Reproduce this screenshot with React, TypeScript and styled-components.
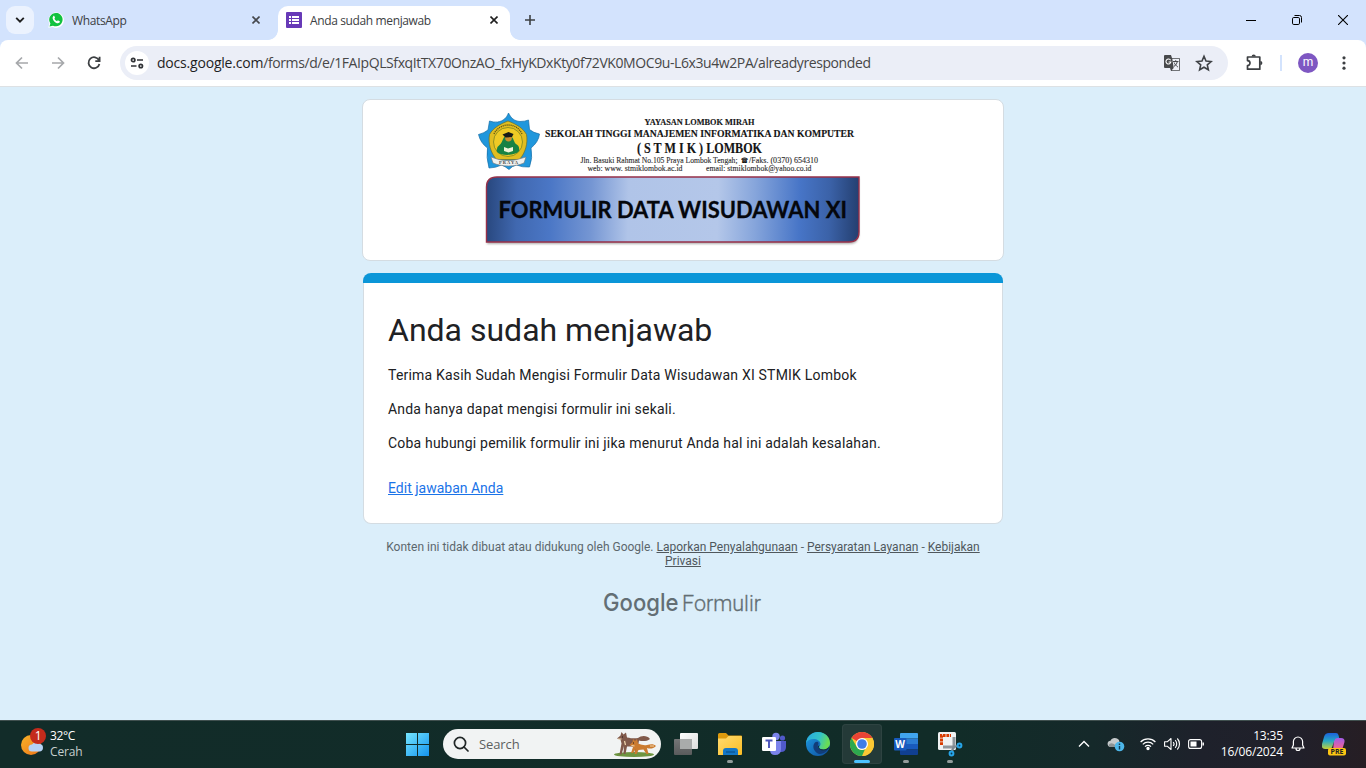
import React from "react";
import styled, { createGlobalStyle } from "styled-components";

const Global = createGlobalStyle`
  * { box-sizing: border-box; }
  body { margin: 0; background: #dbeefa; overflow: hidden; }
  svg { display: block; flex: none; }
`;

const ui = `"Open Sans", "Noto Sans", sans-serif`;

const Screen = styled.div`
  width: 1366px;
  height: 768px;
  display: flex;
  flex-direction: column;
  background: #dbeefa;
  font-family: ${ui};
`;

/* ---------- browser window ---------- */

const TabStrip = styled.div`
  height: 40px;
  flex: none;
  display: flex;
  align-items: flex-end;
  background: #d3e3fd;
  padding-left: 6px;
`;

const TabSearch = styled.div`
  width: 28px;
  height: 28px;
  margin-bottom: 6px;
  border-radius: 9px;
  background: #ebf2fe;
  display: flex;
  align-items: center;
  justify-content: center;
`;

const Tab = styled.div<{ $active?: boolean }>`
  position: relative;
  width: 232px;
  height: 34px;
  margin-left: 6px;
  padding: 0 11px 6px 8px;
  display: flex;
  align-items: center;
  border-radius: 10px 10px 0 0;
  background: ${(p) => (p.$active ? "#fff" : "transparent")};
  ${(p) =>
    p.$active &&
    `&::before, &::after {
      content: "";
      position: absolute;
      bottom: 0;
      width: 10px;
      height: 10px;
    }
    &::before { left: -10px; background: radial-gradient(circle at 0 0, transparent 9.5px, #fff 10.2px); }
    &::after { right: -10px; background: radial-gradient(circle at 100% 0, transparent 9.5px, #fff 10.2px); }`}
`;

const TabTitle = styled.span<{ $spacing: number }>`
  flex: 1;
  margin-left: 8px;
  padding-top: 1px;
  font-size: 12px;
  line-height: 16px;
  letter-spacing: ${(p) => p.$spacing}px;
  color: #3c4043;
  white-space: nowrap;
`;

const TabClose = styled.div<{ $inset: number }>`
  margin-right: ${(p) => p.$inset}px;
`;

const NewTab = styled.div`
  margin: 0 0 14px 14px;
`;

const WindowControls = styled.div`
  margin-left: auto;
  height: 40px;
  display: flex;
`;

const WindowButton = styled.div`
  width: 46px;
  display: flex;
  align-items: center;
  justify-content: center;
`;

const ToolbarWrap = styled.div`
  background: #d3e3fd;
  flex: none;
`;

const Toolbar = styled.div`
  height: 47px;
  border-radius: 8px 8px 0 0;
  border-bottom: 1px solid #dde1e4;
  background: #fff;
  display: flex;
  align-items: center;
  padding: 0 12px;
`;

const NavButtons = styled.div`
  display: flex;
  gap: 16px;
  width: 108px;
`;

const Omnibox = styled.div`
  width: 1108px;
  height: 34px;
  border-radius: 17px;
  background: #ebeef7;
  display: flex;
  align-items: center;
  padding: 0 15px 0 5px;
`;

const SiteInfo = styled.div`
  width: 24px;
  height: 24px;
  border-radius: 50%;
  background: #fff;
  display: flex;
  align-items: center;
  justify-content: center;
`;

const Url = styled.div`
  flex: 1;
  margin-left: 8px;
  padding-bottom: 0;
  font-size: 14px;
  line-height: 20px;
  letter-spacing: -0.41px;
  white-space: nowrap;
  color: #474747;
  b { font-weight: 400; color: #1f1f1f; letter-spacing: -0.2px; }
`;

const OmniIcons = styled.div`
  display: flex;
  gap: 14px;
  align-items: center;
`;

const ToolbarActions = styled.div`
  margin-left: 16px;
  display: flex;
  align-items: center;
`;

const Divider = styled.div`
  width: 2px;
  height: 16px;
  margin: 0 16px 0 16px;
  background: #d3e3fd;
`;

const Avatar = styled.div`
  width: 20px;
  height: 20px;
  margin-right: 24px;
  border-radius: 50%;
  background: #7e57c2;
  color: #fff;
  font-family: Roboto, sans-serif;
  font-size: 12px;
  line-height: 19px;
  text-align: center;
`;

/* ---------- form page ---------- */

const Page = styled.main`
  flex: 1;
  display: flex;
  flex-direction: column;
  align-items: center;
  padding-top: 12px;
  font-family: Roboto, sans-serif;
`;

const BannerCard = styled.div`
  width: 642px;
  height: 162px;
  border: 1px solid #d4dce2;
  border-radius: 8px;
  background: #fff;
  overflow: hidden;
`;

const FormCard = styled.section`
  width: 640px;
  height: 251px;
  margin-top: 12px;
  border: 1px solid #d4dce2;
  border-top: 0;
  border-radius: 8px;
  background: #fff;
`;

const Accent = styled.div`
  height: 10px;
  margin: 0 -1px;
  border-radius: 8px 8px 0 0;
  background: #0b96d8;
`;

const FormBody = styled.div`
  padding: 27px 24px 0;
  color: #202124;
`;

const Title = styled.h1`
  margin: 0 0 15px;
  font-size: 32px;
  line-height: 40px;
  font-weight: 400;
`;

const Paragraph = styled.p`
  margin: 0 0 14px;
  font-size: 14px;
  line-height: 20px;
  letter-spacing: 0.2px;
`;

const EditLink = styled.a`
  display: block;
  margin-top: 25px;
  font-size: 14px;
  line-height: 20px;
  color: #1a73e8;
  text-decoration: underline;
`;

const Footnote = styled.div`
  width: 600px;
  margin-top: 16px;
  text-align: center;
  font-size: 12px;
  line-height: 14px;
  color: #5c676d;
  u { color: #50585d; }
`;

const Brand = styled.div`
  margin-top: 12px;
`;

/* ---------- taskbar ---------- */

const Taskbar = styled.footer`
  height: 48px;
  flex: none;
  display: flex;
  align-items: center;
  padding-bottom: 1px;
  border-top: 1px solid #40504f;
  background: linear-gradient(90deg, #122c29 0%, #112c28 70%, #15292a 80%, #1e212b 88%, #21202a 95%, #261e24 100%);
  color: #fff;
  font-size: 12px;
`;

const Weather = styled.div`
  width: 405px;
  padding: 0 0 0 20px;
  display: flex;
  gap: 3px;
  line-height: 16px;
  letter-spacing: -0.4px;
  span { color: #c6cfce; letter-spacing: -0.15px; }
`;

const SearchBox = styled.div`
  width: 218px;
  height: 30px;
  margin: 0 5px 0 14px;
  border-radius: 15px;
  background: #f1f3f3;
  display: flex;
  align-items: center;
  padding: 0 5px 0 10px;
  color: #5c5f5f;
  font-size: 13px;
  letter-spacing: -0.1px;
  span { flex: 1; margin-left: 10px; }
`;

const AppSlot = styled.div<{ $active?: boolean; $running?: boolean }>`
  position: relative;
  width: 40px;
  height: 40px;
  margin-right: 4px;
  border-radius: 4px;
  display: flex;
  align-items: center;
  justify-content: center;
  ${(p) => p.$active && `background: #243a38; box-shadow: inset 0 0 0 1px #2e4341;`}
  ${(p) =>
    (p.$active || p.$running) &&
    `&::after {
      content: "";
      position: absolute;
      bottom: 1px;
      width: ${p.$active ? 16 : 6}px;
      height: 3px;
      border-radius: 2px;
      background: ${p.$active ? "#4cc2ff" : "#929c9b"};
    }`}
`;

const Tray = styled.div`
  margin-left: auto;
  display: flex;
  align-items: center;
  padding-right: 19px;
`;

const TrayItem = styled.div<{ $gap: number }>`
  margin-left: ${(p) => p.$gap}px;
`;

const Clock = styled.div`
  width: 69px;
  margin: 0 8px 0 10px;
  text-align: right;
  line-height: 16px;
  letter-spacing: -0.15px;
  white-space: nowrap;
`;

const Cross = ({ color }: { color: string }) => (
  <svg width="8" height="8" viewBox="0 0 8 8" stroke={color} strokeWidth="1.6">
    <path d="M.5 .5l7 7M7.500 .5l-7 7" />
  </svg>
);

const WhatsAppIcon = () => (
  <svg width="16" height="16" viewBox="0 0 16 16">
    <path d="M.3 15.800l1.100-4A7.700 7.700 0 1 1 4.600 15z" fill="#fff" />
    <path d="M1.500 14.600l.9-3.100A6.700 6.700 0 1 1 5 13.700z" fill="#12c23f" />
    <path d="M5.200 4.200c.4-.5 1-.5 1.200 0l.6 1.400c.1.3-.2.6-.6 1.100.6 1.200 1.400 1.900 2.700 2.500.5-.7.7-1 1.100-.8l1.500.8c.4.3 0 1.300-.5 1.600-1.500 1-3.600-.1-4.900-1.400C4.900 7.900 3.900 5.700 5.200 4.200z" fill="#fff" />
  </svg>
);

const FormsIcon = () => (
  <svg width="16" height="16" viewBox="0 0 16 16">
    <rect width="16" height="16" rx="1" fill="#673ab7" />
    <path d="M3 4h2v2H3zM6 4h7v2H6zM3 7h2v2H3zM6 7h7v2H6zM3 10h2v2H3zM6 10h7v2H6z" fill="#fff" />
  </svg>
);

const Banner = () => (
  <svg width="640" height="160" viewBox="363 100 640 160">
    <defs>
      <linearGradient id="plate" gradientUnits="userSpaceOnUse" x1="487" y1="205" x2="859" y2="213">
        <stop offset="0" stopColor="#29487f" />
        <stop offset="0.08" stopColor="#4068b0" />
        <stop offset="0.17" stopColor="#4b77c6" />
        <stop offset="0.28" stopColor="#7596d3" />
        <stop offset="0.38" stopColor="#b0c4e8" />
        <stop offset="0.62" stopColor="#b4c7e9" />
        <stop offset="0.72" stopColor="#86a5db" />
        <stop offset="0.84" stopColor="#4775c7" />
        <stop offset="0.92" stopColor="#3b62a8" />
        <stop offset="1" stopColor="#243f70" />
      </linearGradient>
      <filter id="soft" x="-5%" y="-5%" width="110%" height="120%">
        <feGaussianBlur stdDeviation="0.9" />
      </filter>
    </defs>

    <path d="M508.500 113C511 118 514 121 520 121.500q5 0 8.500-1.500l1 9.500q4 3.500 10 4.500-1 8-8.500 14 2 10-1.500 19-7 .5-13-2-4.500 1-7.500 4.500-3.500-3-7.500-4.500-6 3-12.500 3-3-11-1.500-20-7-5-9-13.500 6-1.500 9.500-4.500l1.500-9q4 1.500 8 1C503.500 121 506.500 118 508.500 113z" fill="#2097dc" stroke="#176fa8" strokeWidth=".7" strokeLinejoin="round" />
    <path d="M508 121c8 3 15 7 18.500 13.500 1.500 9-1 18-7 25h-23c-6-7-8.500-16-7-25C493 128 500 124 508 121z" fill="#e1bd20" stroke="#6e7126" strokeWidth=".7" />
    <circle cx="508" cy="142" r="14.500" fill="#efca25" stroke="#6d7d21" strokeWidth=".7" />
    <path d="M494 134c5-11 22-13 28 0" fill="none" stroke="#5f5517" strokeWidth="1.300" strokeDasharray="1.200 .8" />
    <path d="M508 135.500c6 0 5 6 8 8.500q4 2 3 7c-4 5-18 5-22 1q-1-5 2.500-7c4-3 2.500-9.500 8.500-9.500z" fill="#178243" />
    <circle cx="508.500" cy="138" r="3.400" fill="#cc8f2e" />
    <path d="M502.500 134.500l6-2.500 5 2-1.500 3-6.500 .5z" fill="#171b18" />
    <path d="M504 147l4 1.500 5-1.500v4l-4.500 1.500-4.500-1.500z" fill="#edf4d8" />
    <path d="M491 157l6 2c7 2 15 2 22 0l7-2-2 6c-9 4-22 4-31 0z" fill="#eef0ee" stroke="#777" strokeWidth=".6" />
    <text x="508.500" y="163.500" textAnchor="middle" fontSize="4.500" fontFamily="Liberation Serif, serif" fontWeight="700" fill="#444" textLength="19">PRAYA</text>

    <g fontFamily='"Liberation Serif", serif' fill="#151515" stroke="#151515" strokeWidth=".15" fontWeight="700">
      <text x="644.500" y="125" fontSize="9.200" textLength="110" lengthAdjust="spacingAndGlyphs">YAYASAN LOMBOK MIRAH</text>
      <text x="545" y="137" fontSize="11.200" textLength="309" lengthAdjust="spacingAndGlyphs">SEKOLAH TINGGI MANAJEMEN INFORMATIKA DAN KOMPUTER</text>
      <text x="637" y="152.500" fontSize="13.800" textLength="125" lengthAdjust="spacingAndGlyphs">( S T M I K ) LOMBOK</text>
    </g>
    <g fontFamily='"Liberation Serif", serif' fill="#2c2c2c" stroke="#2c2c2c" strokeWidth=".12">
      <text x="580.500" y="162.700" fontSize="8.200" textLength="157" lengthAdjust="spacingAndGlyphs">Jln. Basuki Rahmat No.105 Praya Lombok Tengah;</text>
      <text x="741" y="162.500" fontSize="7.500" fontFamily="DejaVu Sans, sans-serif" fill="#111" textLength="7" lengthAdjust="spacingAndGlyphs">☎</text>
      <text x="749" y="162.700" fontSize="8.200" textLength="69" lengthAdjust="spacingAndGlyphs">/Faks. (0370) 654310</text>
      <text x="587.500" y="171.300" fontSize="8.200" textLength="95" lengthAdjust="spacingAndGlyphs">web: www. stmiklombok.ac.id</text>
      <text x="706" y="171.300" fontSize="8.200" textLength="105.500" lengthAdjust="spacingAndGlyphs">email: stmiklombok@yahoo.co.id</text>
    </g>

    <path d="M497 178h362v56q0 10-10 10H487v-56q0-10 10-10z" fill="#777" opacity=".6" filter="url(#soft)" />
    <path d="M497 177h362v55q0 10-10 10H486.500v-55q0-10 10.500-10z" fill="url(#plate)" stroke="#973049" strokeWidth="1.400" />
    <text x="498.500" y="218.300" fontSize="22.500" fontFamily="Lato, sans-serif" fontWeight="700" fill="#05070c" stroke="#05070c" strokeWidth=".3" textLength="348.500" lengthAdjust="spacingAndGlyphs">FORMULIR DATA WISUDAWAN XI</text>
  </svg>
);

const FoxIcon = () => (
  <svg width="44" height="28" viewBox="0 0 44 28">
    <ellipse cx="22" cy="24.500" rx="20" ry="2.500" fill="#6d9440" />
    <path d="M5 8.500l3.500-3L9.500 2l2 2.500L14 2.500l1 5c5 1 8 1 11 .5 3-2.500 9-3 12 1-3 2.500-8 2.500-11 1.500l-1 6-1 7h-2l-1-7-7 0-1.500 7.500h-2l.5-8-2.500 8.500H7.500l2-11-1-4z" fill="#80594a" />
    <path d="M17.500 15l3-3 .5-3 2 2 2-2 1 4.500c4 1.500 6 2 9 1.500 4-1 7-1 9 1-3 3-6 3-9 2l1.500 6h-2l-3-4.500-5 .5-2 4h-2l1-5-2.500 4h-2l2-6z" fill="#cb7b2f" />
    <path d="M6 9l3.500 0M12.500 11l1 4M19.500 15.500l3 .5M38 16l4 0" stroke="#f0d6ae" strokeWidth="1.200" />
    <path d="M10 7h1M21 13h1" stroke="#231b18" strokeWidth="1" />
  </svg>
);

export default function App() {
  return (
    <Screen>
      <Global />
      <TabStrip>
        <TabSearch>
          <svg width="10" height="6" viewBox="0 0 10 6" fill="none" stroke="#1f1f1f" strokeWidth="1.900">
            <path d="M1.200 .9L5 4.600 8.800 .9" />
          </svg>
        </TabSearch>
        <Tab>
          <WhatsAppIcon />
          <TabTitle $spacing={-0.35}>WhatsApp</TabTitle>
          <TabClose $inset={1}><Cross color="#45484d" /></TabClose>
        </Tab>
        <Tab $active>
          <FormsIcon />
          <TabTitle $spacing={-0.37}>Anda sudah menjawab</TabTitle>
          <TabClose $inset={1}><Cross color="#1f1f1f" /></TabClose>
        </Tab>
        <NewTab>
          <svg width="12" height="12" viewBox="0 0 12 12" stroke="#3c4043" strokeWidth="1.600">
            <path d="M6 1v10M1 6h10" />
          </svg>
        </NewTab>
        <WindowControls>
          <WindowButton>
            <svg width="10" height="10" viewBox="0 0 10 10"><path d="M0 5.500h10" stroke="#000" /></svg>
          </WindowButton>
          <WindowButton>
            <svg width="10" height="10" viewBox="0 0 10 10" fill="none" stroke="#000">
              <rect x=".5" y="2.500" width="7" height="7" rx="1.300" />
              <path d="M2.500 .5h5a2 2 0 0 1 2 2v5" />
            </svg>
          </WindowButton>
          <WindowButton>
            <svg width="10" height="10" viewBox="0 0 10 10" stroke="#000" strokeWidth="1.100"><path d="M0 0l10 10M10 0L0 10" /></svg>
          </WindowButton>
        </WindowControls>
      </TabStrip>

      <ToolbarWrap>
        <Toolbar>
          <NavButtons>
            <svg width="20" height="20" viewBox="0 0 20 20" fill="none" stroke="#a6a8ab" strokeWidth="1.700"><path d="M16 10H5M10 4.500L4.500 10l5.500 5.500" /></svg>
            <svg width="20" height="20" viewBox="0 0 20 20" fill="none" stroke="#a6a8ab" strokeWidth="1.700"><path d="M4 10h11M10 4.500l5.500 5.500-5.500 5.500" /></svg>
            <svg width="20" height="20" viewBox="0 0 20 20" fill="none" stroke="#3c3f42" strokeWidth="1.800"><path d="M15 7.300A5.500 5.500 0 1 0 15.400 11M15.600 3.800v4.300h-4.300" /></svg>
          </NavButtons>
          <Omnibox>
            <SiteInfo>
              <svg width="14" height="12" viewBox="0 0 14 12" fill="none" stroke="#303236" strokeWidth="1.700">
                <circle cx="3.200" cy="3" r="1.700" /><path d="M7 3h6M1 9h5.500" /><circle cx="10.800" cy="9" r="1.700" />
              </svg>
            </SiteInfo>
            <Url><b>docs.google.com</b>/forms/d/e/1FAIpQLSfxqItTX70OnzAO_fxHyKDxKty0f72VK0MOC9u-L6x3u4w2PA/alreadyresponded</Url>
            <OmniIcons>
              <svg width="18" height="18" viewBox="0 0 18 18">
                <path d="M2 1h6l1 3h7q1 0 1 1v11q0 1-1 1H8l-1-3H2q-1 0-1-1V2q0-1 1-1z" fill="#47494c" />
                <path d="M9.300 4.800h6.900v11.400H8.700l2-2.200z" fill="#eef1f8" />
                <path d="M7.600 6.200A2.500 2.500 0 1 0 7.900 8H5.600" fill="none" stroke="#fff" strokeWidth="1.100" />
                <path d="M10 7.500h5.500M12.700 6.200v1.300M14.300 7.500c-.4 2.300-1.800 4-3.500 5M11.200 8.500c.6 1.800 2 3.500 3.700 4.500" fill="none" stroke="#47494c" strokeWidth="1" />
              </svg>
              <svg width="18" height="18" viewBox="0 0 18 18" fill="none" stroke="#3f4246" strokeWidth="1.600">
                <path d="M9 2.300l2 4.700 5.100.5-3.800 3.300 1.100 5L9 13.200l-4.400 2.600 1.100-5-3.800-3.300 5.100-.5z" />
              </svg>
            </OmniIcons>
          </Omnibox>
          <ToolbarActions>
            <svg width="20" height="20" viewBox="0 0 20 20">
              <path d="M3.500 4h12.300v12.200H3.500v-3.600a2.400 2.400 0 0 0 0-5z" fill="none" stroke="#3c3f42" strokeWidth="1.700" strokeLinejoin="round" />
              <path d="M7.600 3.500a2.100 2.100 0 0 1 4.200 0zM16.300 8a2.100 2.100 0 0 1 0 4.200z" fill="#3c3f42" />
            </svg>
            <Divider />
            <Avatar>m</Avatar>
            <svg width="4" height="14" viewBox="0 0 4 14" fill="#3c3f42">
              <circle cx="2" cy="1.800" r="1.600" /><circle cx="2" cy="7" r="1.600" /><circle cx="2" cy="12.200" r="1.600" />
            </svg>
          </ToolbarActions>
        </Toolbar>
      </ToolbarWrap>

      <Page>
        <BannerCard><Banner /></BannerCard>
        <FormCard>
          <Accent />
          <FormBody>
            <Title>Anda sudah menjawab</Title>
            <Paragraph>Terima Kasih Sudah Mengisi Formulir Data Wisudawan XI STMIK Lombok</Paragraph>
            <Paragraph>Anda hanya dapat mengisi formulir ini sekali.</Paragraph>
            <Paragraph>Coba hubungi pemilik formulir ini jika menurut Anda hal ini adalah kesalahan.</Paragraph>
            <EditLink>Edit jawaban Anda</EditLink>
          </FormBody>
        </FormCard>
        <Footnote>
          Konten ini tidak dibuat atau didukung oleh Google. <u>Laporkan Penyalahgunaan</u> - <u>Persyaratan Layanan</u> - <u>Kebijakan Privasi</u>
        </Footnote>
        <Brand>
          <svg width="160" height="48" viewBox="603 579 160 48" fill="#636e74">
            <text x="603" y="610" fontFamily="Inter, sans-serif" fontWeight="500" fontSize="24" textLength="75.500" lengthAdjust="spacingAndGlyphs">Google</text>
            <text x="682" y="610" fontFamily="Roboto, sans-serif" fontWeight="300" fontSize="22" stroke="#636e74" strokeWidth=".3" textLength="79" lengthAdjust="spacingAndGlyphs">Formulir</text>
          </svg>
        </Brand>
      </Page>

      <Taskbar>
        <Weather>
          <svg width="27" height="32" viewBox="0 0 27 32">
            <defs><linearGradient id="sun" x1="0" y1="0" x2="1" y2="1"><stop offset="0" stopColor="#f9b429" /><stop offset="1" stopColor="#ee7419" /></linearGradient></defs>
            <circle cx="11" cy="17" r="10" fill="url(#sun)" />
            <path d="M12 23.500a3.500 3.500 0 0 1 0-7 5 5 0 0 1 8-.5 3.800 3.800 0 0 1-.5 7.500z" fill="#b6d2f5" />
            <circle cx="18" cy="8" r="8" fill="#c42b1c" />
            <text x="18" y="12.300" textAnchor="middle" fontSize="12" fontFamily="Open Sans, sans-serif" fill="#fff">1</text>
          </svg>
          <div>32°C<br /><span>Cerah</span></div>
        </Weather>
        <svg width="24" height="24" viewBox="0 0 24 24">
          <defs><linearGradient id="win" x1="0" y1="0" x2="1" y2="1"><stop offset="0" stopColor="#75e6ff" /><stop offset="1" stopColor="#1493ee" /></linearGradient></defs>
          <path d="M1 1h11v11H1zM13 1h11v11H13zM1 13h11v11H1zM13 13h11v11H13z" fill="url(#win)" />
        </svg>
        <SearchBox>
          <svg width="16" height="16" viewBox="0 0 16 16" fill="none" stroke="#202626" strokeWidth="1.700"><circle cx="7" cy="7" r="5.600" /><path d="M11 11l4 4" strokeLinecap="round" /></svg>
          <span>Search</span>
          <FoxIcon />
        </SearchBox>
        <AppSlot>
          <svg width="24" height="24" viewBox="0 0 24 24">
            <defs>
              <linearGradient id="tv1" x1="0" y1="0" x2="1" y2="1"><stop offset="0" stopColor="#fff" /><stop offset="1" stopColor="#dcdcdc" /></linearGradient>
              <linearGradient id="tv2" x1="0" y1="0" x2="0" y2="1"><stop offset="0" stopColor="#747677" /><stop offset="1" stopColor="#5a5b5c" /></linearGradient>
            </defs>
            <rect x="6" y="1" width="18" height="16" rx="1" fill="url(#tv1)" />
            <rect x="0" y="7" width="18" height="16" rx="1" fill="url(#tv2)" />
            <path d="M6 7h12v10H6z" fill="#a9abab" />
          </svg>
        </AppSlot>
        <AppSlot $running>
          <svg width="24" height="24" viewBox="0 0 24 24">
            <defs><linearGradient id="fold" x1="0" y1="0" x2="1" y2="1"><stop offset="0" stopColor="#ffdb70" /><stop offset="1" stopColor="#fcbd24" /></linearGradient></defs>
            <path d="M0 2.500Q0 1 1.500 1H8l2.500 2.500H23q1 0 1 1V10H0z" fill="#de9a0d" />
            <path d="M0 6.500h8L10.500 4H23q1 0 1 1v17q0 1-1 1H0z" fill="url(#fold)" />
            <path d="M5 23v-4q0-3 3-3h9q3 0 3 3v4z" fill="#1477c6" /><path d="M8 20h9" stroke="#0b5898" strokeWidth="1.500" />
          </svg>
        </AppSlot>
        <AppSlot>
          <svg width="24" height="24" viewBox="0 0 24 24">
            <circle cx="14" cy="4.500" r="3.700" fill="#7b83eb" /><circle cx="20.500" cy="6" r="2.600" fill="#5059c9" />
            <path d="M16 9h8v6q0 5-5 5h-3z" fill="#5059c9" /><path d="M8 9h11v8q0 6-6 6-5 0-5-5z" fill="#7b83eb" />
            <rect x="0" y="5" width="14" height="14" rx="1.300" fill="#fff" />
            <path d="M3.500 8.500h7M7 8.500V16" stroke="#4b53bc" strokeWidth="1.900" />
          </svg>
        </AppSlot>
        <AppSlot>
          <svg width="24" height="24" viewBox="0 0 24 24">
            <defs>
              <linearGradient id="ed1" x1="0" y1="0" x2="1" y2=".3"><stop offset="0" stopColor="#28a9e4" /><stop offset=".6" stopColor="#33c3c8" /><stop offset="1" stopColor="#69dc55" /></linearGradient>
              <linearGradient id="ed2" x1="0" y1="0" x2="1" y2="1"><stop offset="0" stopColor="#1e9de4" /><stop offset="1" stopColor="#0e4c9a" /></linearGradient>
            </defs>
            <circle cx="12" cy="12" r="12" fill="url(#ed2)" />
            <path d="M0 11C1 4 6 0 12 0c7 0 12 5 12 11 0 4-3 6.500-6.500 6.500-3 0-4.500-1-4.500-2.200 0-.8 1.500-1.300 1.500-3.300C14.500 9 11 7 7.500 7 4 7 1.500 8.500 0 11z" fill="url(#ed1)" />
            <path d="M9 10.500c-3 3-2 9 4 11.500 4 0 7-1.500 9.500-5-4 2-9 1.500-10.500-2-.8-1.500.7-2.500.5-4-.5-1.700-2.300-1.600-3.500-.5z" fill="#123d79" />
            <path d="M13 15.300c0 1.500 2 2.200 4.500 2.200 2.200 0 4.300-1 5.500-3l-.5 2.500c-3 2-10 2.500-10.500-2.500 0-1 2-1.500 1-.2z" fill="#102d36" />
          </svg>
        </AppSlot>
        <AppSlot $active>
          <svg width="24" height="24" viewBox="0 0 24 24">
            <circle cx="12" cy="12" r="12" fill="#fcc934" />
            <path d="M12 12L1.600 6A12 12 0 0 1 22.400 6z" fill="#ea4335" />
            <path d="M12 6h10.400A12 12 0 0 1 12 24l5.200-9z" fill="#fcc934" />
            <path d="M1.600 6l5.200 9c1 1.800 3 3 5.200 3 1 0 2-.2 3-.8L12 24A12 12 0 0 1 1.600 6z" fill="#2da94f" />
            <circle cx="12" cy="12" r="6" fill="#fff" /><circle cx="12" cy="12" r="4.800" fill="#3f7de8" />
          </svg>
        </AppSlot>
        <AppSlot $running>
          <svg width="24" height="24" viewBox="0 0 24 24">
            <path d="M6 2q0-1 1-1h16q1 0 1 1v4.500H6z" fill="#41a5ee" /><path d="M6 6.500h18V12H6z" fill="#2b7cd3" />
            <path d="M6 12h18v5.500H6z" fill="#185abd" /><path d="M6 17.500h18V22q0 1-1 1H7q-1 0-1-1z" fill="#103f91" />
            <rect x="0" y="6" width="12.500" height="12.500" rx="1" fill="#185abd" />
            <text x="6.200" y="16" textAnchor="middle" fontSize="10" fontWeight="700" fontFamily="Open Sans, sans-serif" fill="#fff">W</text>
          </svg>
        </AppSlot>
        <AppSlot $running>
          <svg width="26" height="26" viewBox="0 0 26 26">
            <rect x="1" y="1" width="18" height="18" rx="1.500" fill="#f0f2f3" />
            <path d="M4.500 14V4.500H14" fill="none" stroke="#d83b01" strokeWidth="3" strokeDasharray="2.800 .8" />
            <path d="M17 6v10H6" fill="none" stroke="#8f969c" strokeWidth="3" />
            <path d="M17 15l-2 5M16 16l5-1" stroke="#7b8790" strokeWidth="2.200" />
            <circle cx="22.500" cy="14.500" r="1.900" fill="#0d3a52" stroke="#27a5e8" strokeWidth="2" /><circle cx="14.500" cy="22.500" r="1.900" fill="#0d3a52" stroke="#27a5e8" strokeWidth="2" />
          </svg>
        </AppSlot>
        <Tray>
          <svg width="12" height="8" viewBox="0 0 12 8" fill="none" stroke="#fff" strokeWidth="1.400"><path d="M1 6.500l5-5 5 5" /></svg>
          <TrayItem $gap={17}>
            <svg width="18" height="16" viewBox="0 0 18 16">
              <path d="M3 11a3.200 3.200 0 0 1 .5-6.300A5 5 0 0 1 12 4l1 6-2 1z" fill="#c4c8ca" /><path d="M1.500 9.500C3 6 6 7 8 9l1 2H3z" fill="#8b9294" />
              <circle cx="12.500" cy="10.500" r="4.800" fill="#4db7ea" /><path d="M12.500 7.500V9M12.500 10v3.500" stroke="#123d55" strokeWidth="1.400" />
            </svg>
          </TrayItem>
          <TrayItem $gap={15}>
            <svg width="16" height="14" viewBox="0 0 16 14" fill="none" stroke="#fff" strokeWidth="1.200">
              <path d="M.6 5a10.500 10.500 0 0 1 14.800 0M2.800 7.300a7.300 7.300 0 0 1 10.400 0M5 9.600a4.200 4.200 0 0 1 6 0" /><circle cx="8" cy="11.500" r="1.100" fill="#fff" />
            </svg>
          </TrayItem>
          <TrayItem $gap={8}>
            <svg width="17" height="14" viewBox="0 0 17 14" fill="none" stroke="#fff" strokeWidth="1.100">
              <path d="M.6 4.800h2.600L7 1.500v11L3.200 9.200H.6z" strokeLinejoin="round" /><path d="M9.200 5a3 3 0 0 1 0 4M11.200 3.200a5.500 5.500 0 0 1 0 7.600M13.300 1.500a8 8 0 0 1 0 11" />
            </svg>
          </TrayItem>
          <TrayItem $gap={7}>
            <svg width="16" height="10" viewBox="0 0 16 10" fill="none" stroke="#fff" strokeWidth="1.100">
              <rect x=".6" y=".6" width="13" height="8.800" rx="2" /><rect x="2.500" y="2.500" width="6" height="5" fill="#fff" stroke="none" /><path d="M15.200 3.500v3" strokeWidth="1.500" />
            </svg>
          </TrayItem>
          <Clock>13:35<br />16/06/2024</Clock>
          <svg width="14" height="16" viewBox="0 0 14 16" fill="none" stroke="#fff" strokeWidth="1.200" strokeLinejoin="round">
            <path d="M7 1a4.600 4.600 0 0 0-4.600 4.600V9L1 12h12l-1.400-3V5.600A4.600 4.600 0 0 0 7 1zM5 12.500a2 2 0 0 0 4 0" />
          </svg>
          <TrayItem $gap={17}>
            <svg width="25" height="24" viewBox="0 0 25 24">
              <defs>
                <linearGradient id="cp1" x1="0" y1="0" x2="0" y2="1"><stop offset="0" stopColor="#1b62dc" /><stop offset=".5" stopColor="#26a9c4" /><stop offset="1" stopColor="#c2cf38" /></linearGradient>
                <linearGradient id="cp2" x1="0" y1="0" x2="0" y2="1"><stop offset="0" stopColor="#a05be8" /><stop offset=".6" stopColor="#e262a4" /><stop offset="1" stopColor="#f48b61" /></linearGradient>
              </defs>
              <path d="M12 6h7q4 0 3.500 4l-1.500 5q-1 5-6 5h-4z" fill="url(#cp2)" />
              <path d="M7 1h7q2 0 2.500 2l.7 3h-2q-2 0-3 3l-2 6q-.7 2-3 2H3q-4 0-3-5l2-7q1-4 5-4z" fill="url(#cp1)" />
              <rect x="6" y="16" width="18" height="7.500" rx="2" fill="#fdc513" />
              <text x="15" y="22.300" textAnchor="middle" fontSize="7" fontWeight="700" fontFamily="Open Sans, sans-serif" fill="#222" textLength="13">PRE</text>
            </svg>
          </TrayItem>
        </Tray>
      </Taskbar>
    </Screen>
  );
}
